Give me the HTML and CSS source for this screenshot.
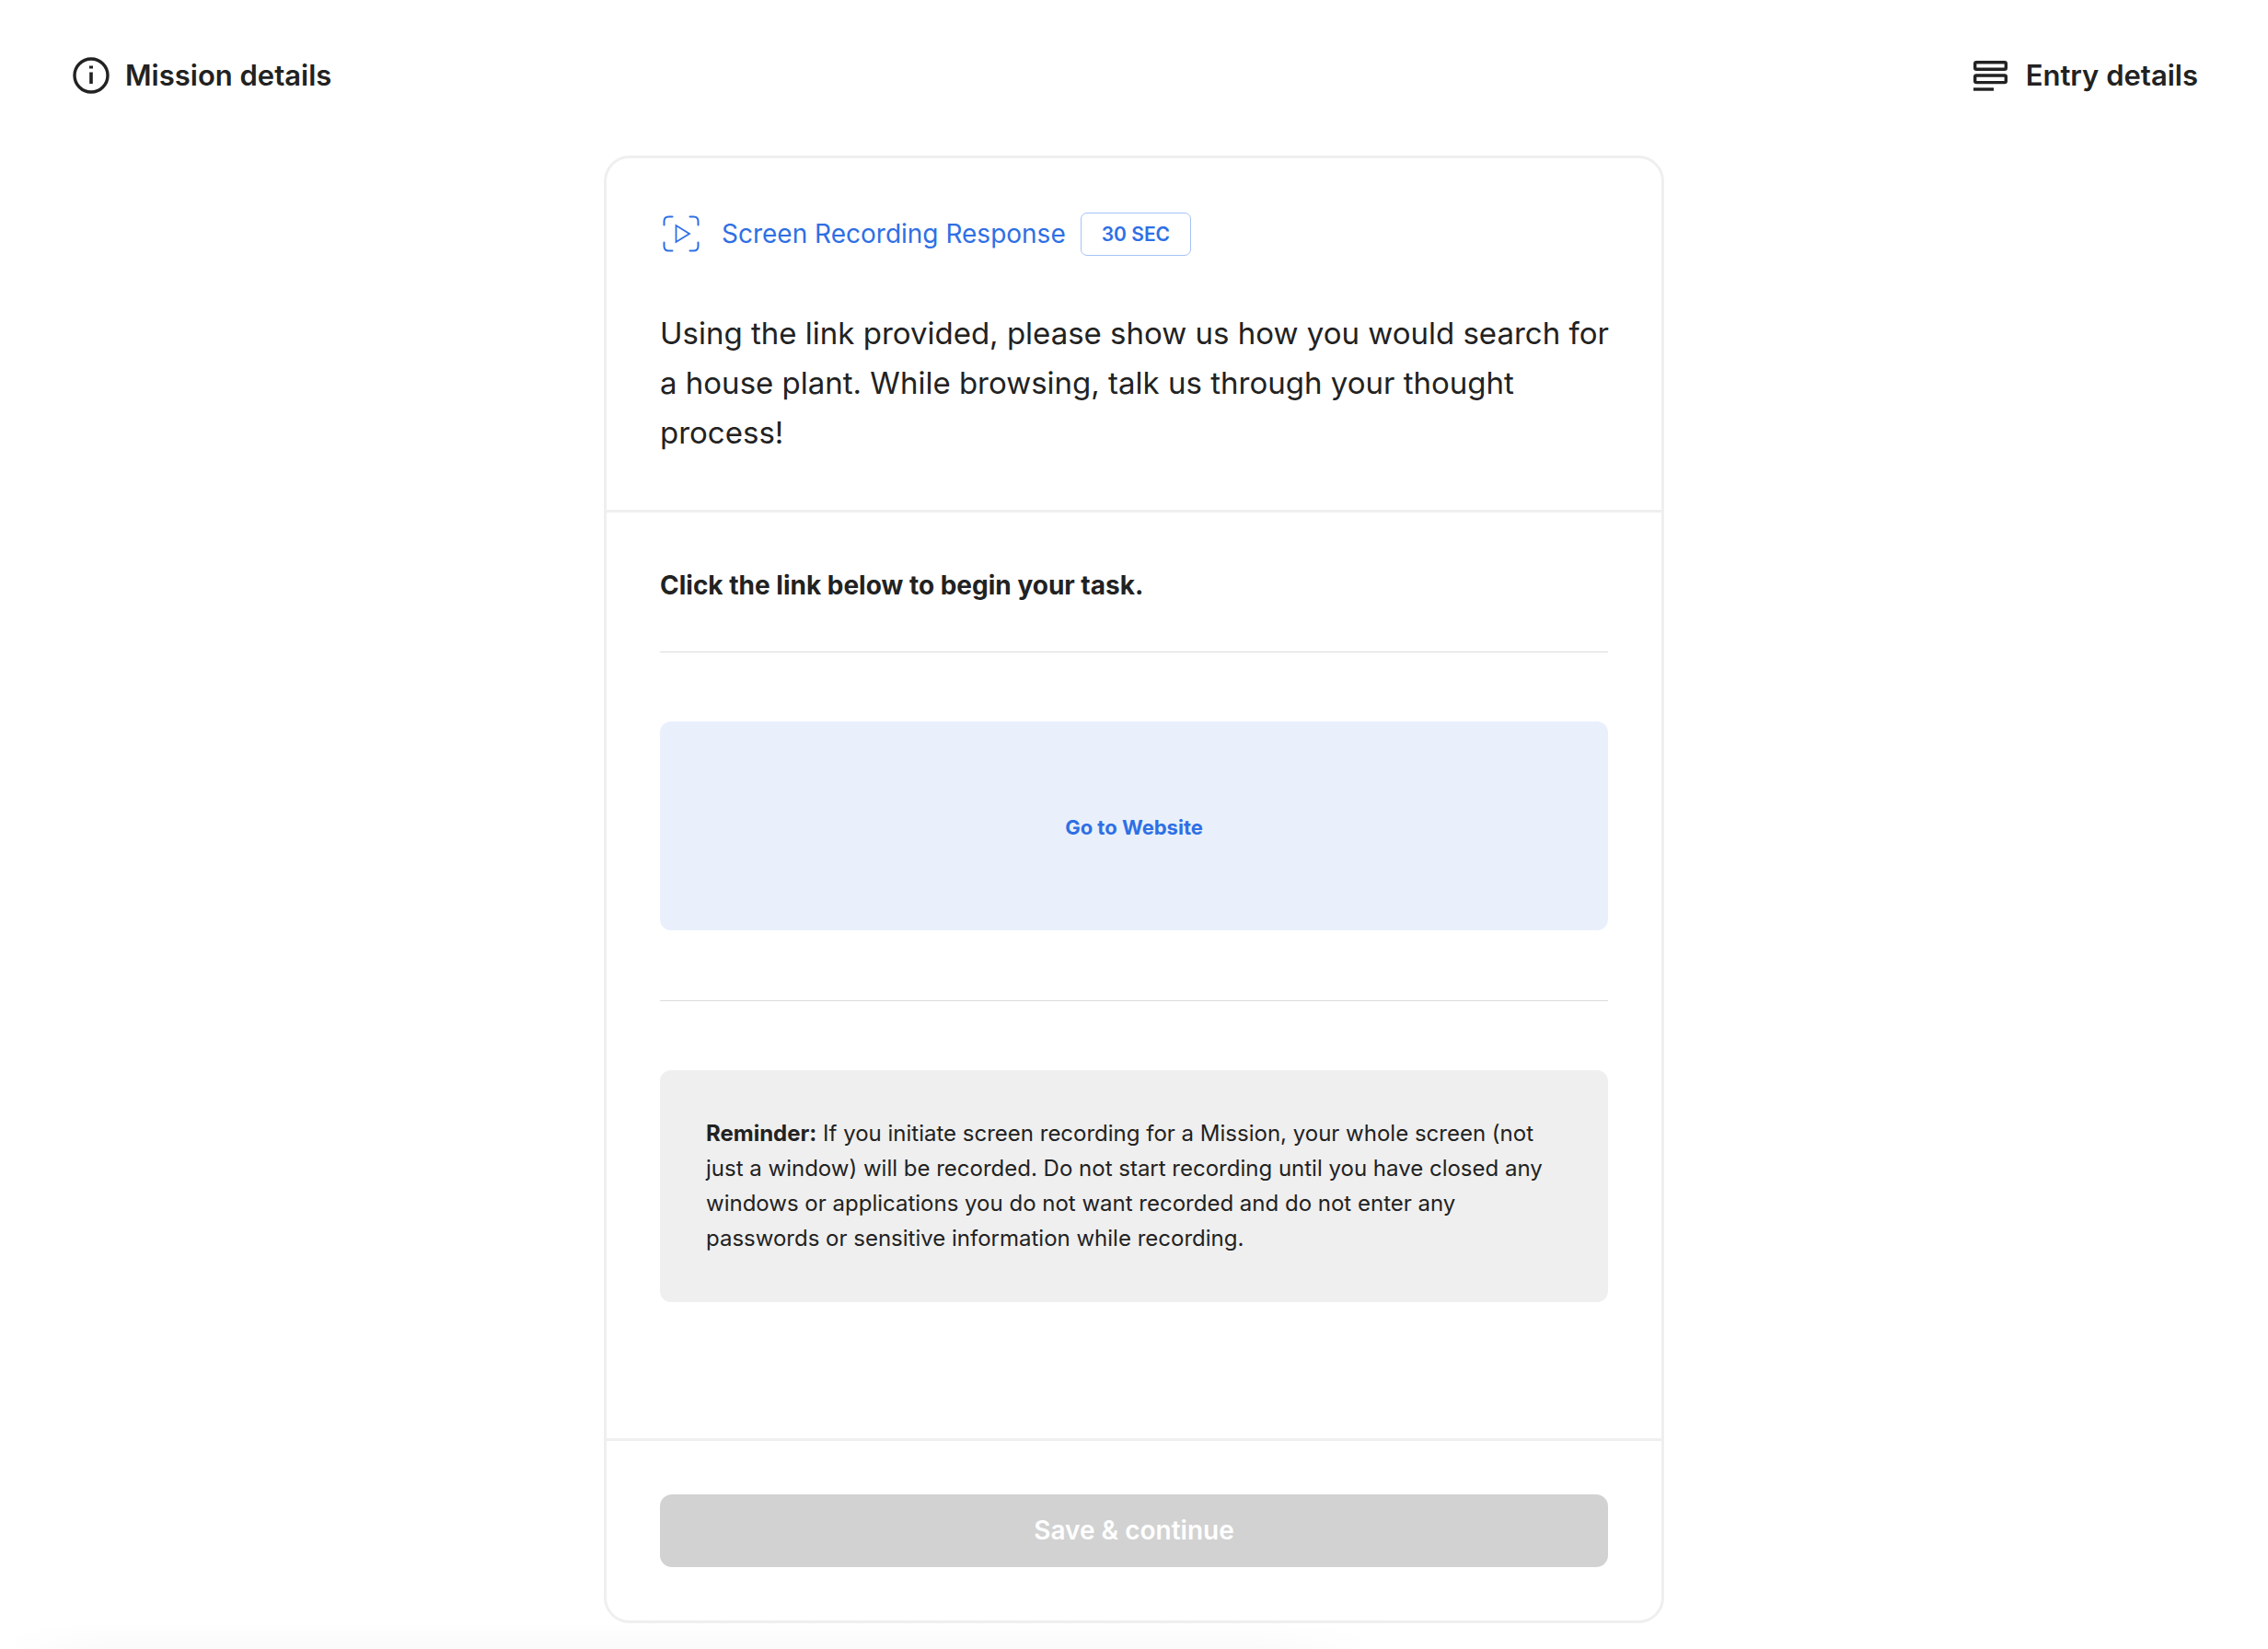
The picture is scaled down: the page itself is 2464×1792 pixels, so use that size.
FILE: index.html
```html
<!DOCTYPE html>
<html lang="en">
<head>
  <meta charset="utf-8">
  <meta name="viewport" content="width=device-width, initial-scale=1">
  <title>Screen Recording Response</title>
  <link rel="stylesheet" href="styles.css">
</head>
<body>
  <header class="topbar">
    <button class="topbar-button" type="button">
      <svg class="icon-info" viewBox="0 0 40 40" aria-hidden="true">
        <circle cx="20" cy="20" r="18" fill="none" stroke="currentColor" stroke-width="3.4"/>
        <path d="M18 9.5h4v3h-4zM18.200 16.500h3.600v12.500h-3.600z" fill="currentColor"/>
      </svg>
      Mission details
    </button>
    <button class="topbar-button" type="button">
      <svg class="icon-list" viewBox="0 0 37 33" aria-hidden="true">
        <g fill="none" stroke="currentColor" stroke-width="3.400">
          <rect x="1.700" y="1.700" width="33.600" height="7.600" rx="1.500"/>
          <rect x="1.700" y="16" width="33.600" height="7.600" rx="1.500"/>
          <path d="M0 31H22"/>
        </g>
      </svg>
      Entry details
    </button>
  </header>

  <main class="card">
    <section class="prompt">
      <div class="prompt-type">
        <svg class="icon-record" viewBox="0 0 40 40" aria-hidden="true">
          <g fill="none" stroke="currentColor" stroke-width="2" stroke-linecap="round" stroke-linejoin="round">
            <path d="M1.500 10.500V6.500Q1.500 1.500 6.500 1.500H10.500M29.500 1.500H33.500Q38.500 1.500 38.500 6.500V10.500M38.500 29.500V33.500Q38.500 38.500 33.500 38.500H29.500M10.500 38.500H6.500Q1.500 38.500 1.500 33.500V29.500"/>
            <path d="M14.500 11V29L29 20Z" stroke-width="1.800" stroke-linejoin="miter"/>
          </g>
        </svg>
        <span class="prompt-name">Screen Recording Response</span>
        <span class="badge">30 SEC</span>
      </div>
      <h1 class="prompt-text">Using the link provided, please show us how you would search for a house plant. While browsing, talk us through your thought process!</h1>
    </section>

    <section class="task">
      <h2 class="task-title">Click the link below to begin your task.</h2>
      <hr class="rule">
      <a class="task-link" href="#">Go to Website</a>
      <hr class="rule">
      <p class="reminder"><strong>Reminder:</strong> If you initiate screen recording for a Mission, your whole screen (not just a window) will be recorded. Do not start recording until you have closed any windows or applications you do not want recorded and do not enter any passwords or sensitive information while recording.</p>
    </section>

    <footer class="actions">
      <button class="save" type="button" disabled>Save &amp; continue</button>
    </footer>
  </main>
  <div class="dock"></div>
</body>
</html>
```
FILE: styles.css
```css
* {
  box-sizing: border-box;
}

body {
  margin: 0;
  background: #fff;
  color: #222;
  font-family: Inter, "Liberation Sans", sans-serif;
}

button {
  font-family: inherit;
}

.topbar {
  display: flex;
  justify-content: space-between;
  padding: 58px 76px 63px 79px;
}

.topbar-button {
  display: flex;
  align-items: center;
  gap: 17px;
  padding: 0;
  border: 0;
  background: none;
  color: inherit;
  font-size: 31px;
  font-weight: 600;
  line-height: 48px;
}

.icon-info {
  width: 40px;
  height: 40px;
}

.icon-list {
  width: 37px;
  height: 33px;
  margin-right: 3px;
}

.card {
  width: 100%;
  max-width: 1152px;
  margin: 0 auto;
  border: 3px solid #efefef;
  border-radius: 28px;
}

.prompt {
  padding: 58px 44px 57px 58px;
  border-bottom: 3px solid #efefef;
}

.prompt-type {
  display: flex;
  align-items: center;
  min-height: 48px;
  color: #2f6fe4;
  font-size: 28px;
}

.icon-record {
  width: 40px;
  height: 40px;
  margin: 0 24px 0 3px;
}

.badge {
  margin-left: 16px;
  padding: 0 22px;
  border: 1px solid #a5c2f6;
  border-radius: 7px;
  font-size: 21px;
  font-weight: 600;
  line-height: 45px;
}

.prompt-text {
  margin: 57px 0 0;
  font-size: 33px;
  font-weight: 400;
  line-height: 54px;
}

.task {
  padding: 57px 58px 148px;
}

.task-title {
  margin: 0;
  font-size: 28px;
  font-weight: 700;
  line-height: 44px;
}

.rule {
  height: 1px;
  margin: 50px 0 75px;
  border: 0;
  background: #dcdcdc;
}

.task-link {
  display: flex;
  align-items: center;
  justify-content: center;
  min-height: 227px;
  padding-top: 2px;
  border-radius: 12px;
  background: #e9f0fc;
  color: #2f6fe4;
  font-size: 22px;
  font-weight: 700;
  text-decoration: none;
}

.task-link + .rule {
  margin-top: 76px;
}

.reminder {
  margin: 0;
  padding: 50px 58px 50px 50px;
  border-radius: 12px;
  background: #efefef;
  font-size: 24px;
  line-height: 38px;
}

.actions {
  padding: 58px;
  border-top: 3px solid #efefef;
}

.save {
  display: block;
  width: 100%;
  padding: 0;
  border: 0;
  border-radius: 13px;
  background: #d2d2d2;
  color: #fff;
  font-size: 28px;
  font-weight: 600;
  line-height: 79px;
}

.dock {
  height: 28px;
  background:
    linear-gradient(#fff, transparent),
    linear-gradient(to right, #fff, #fafafa 5%, #fafafa 55%, #fff 61%);
}
```
